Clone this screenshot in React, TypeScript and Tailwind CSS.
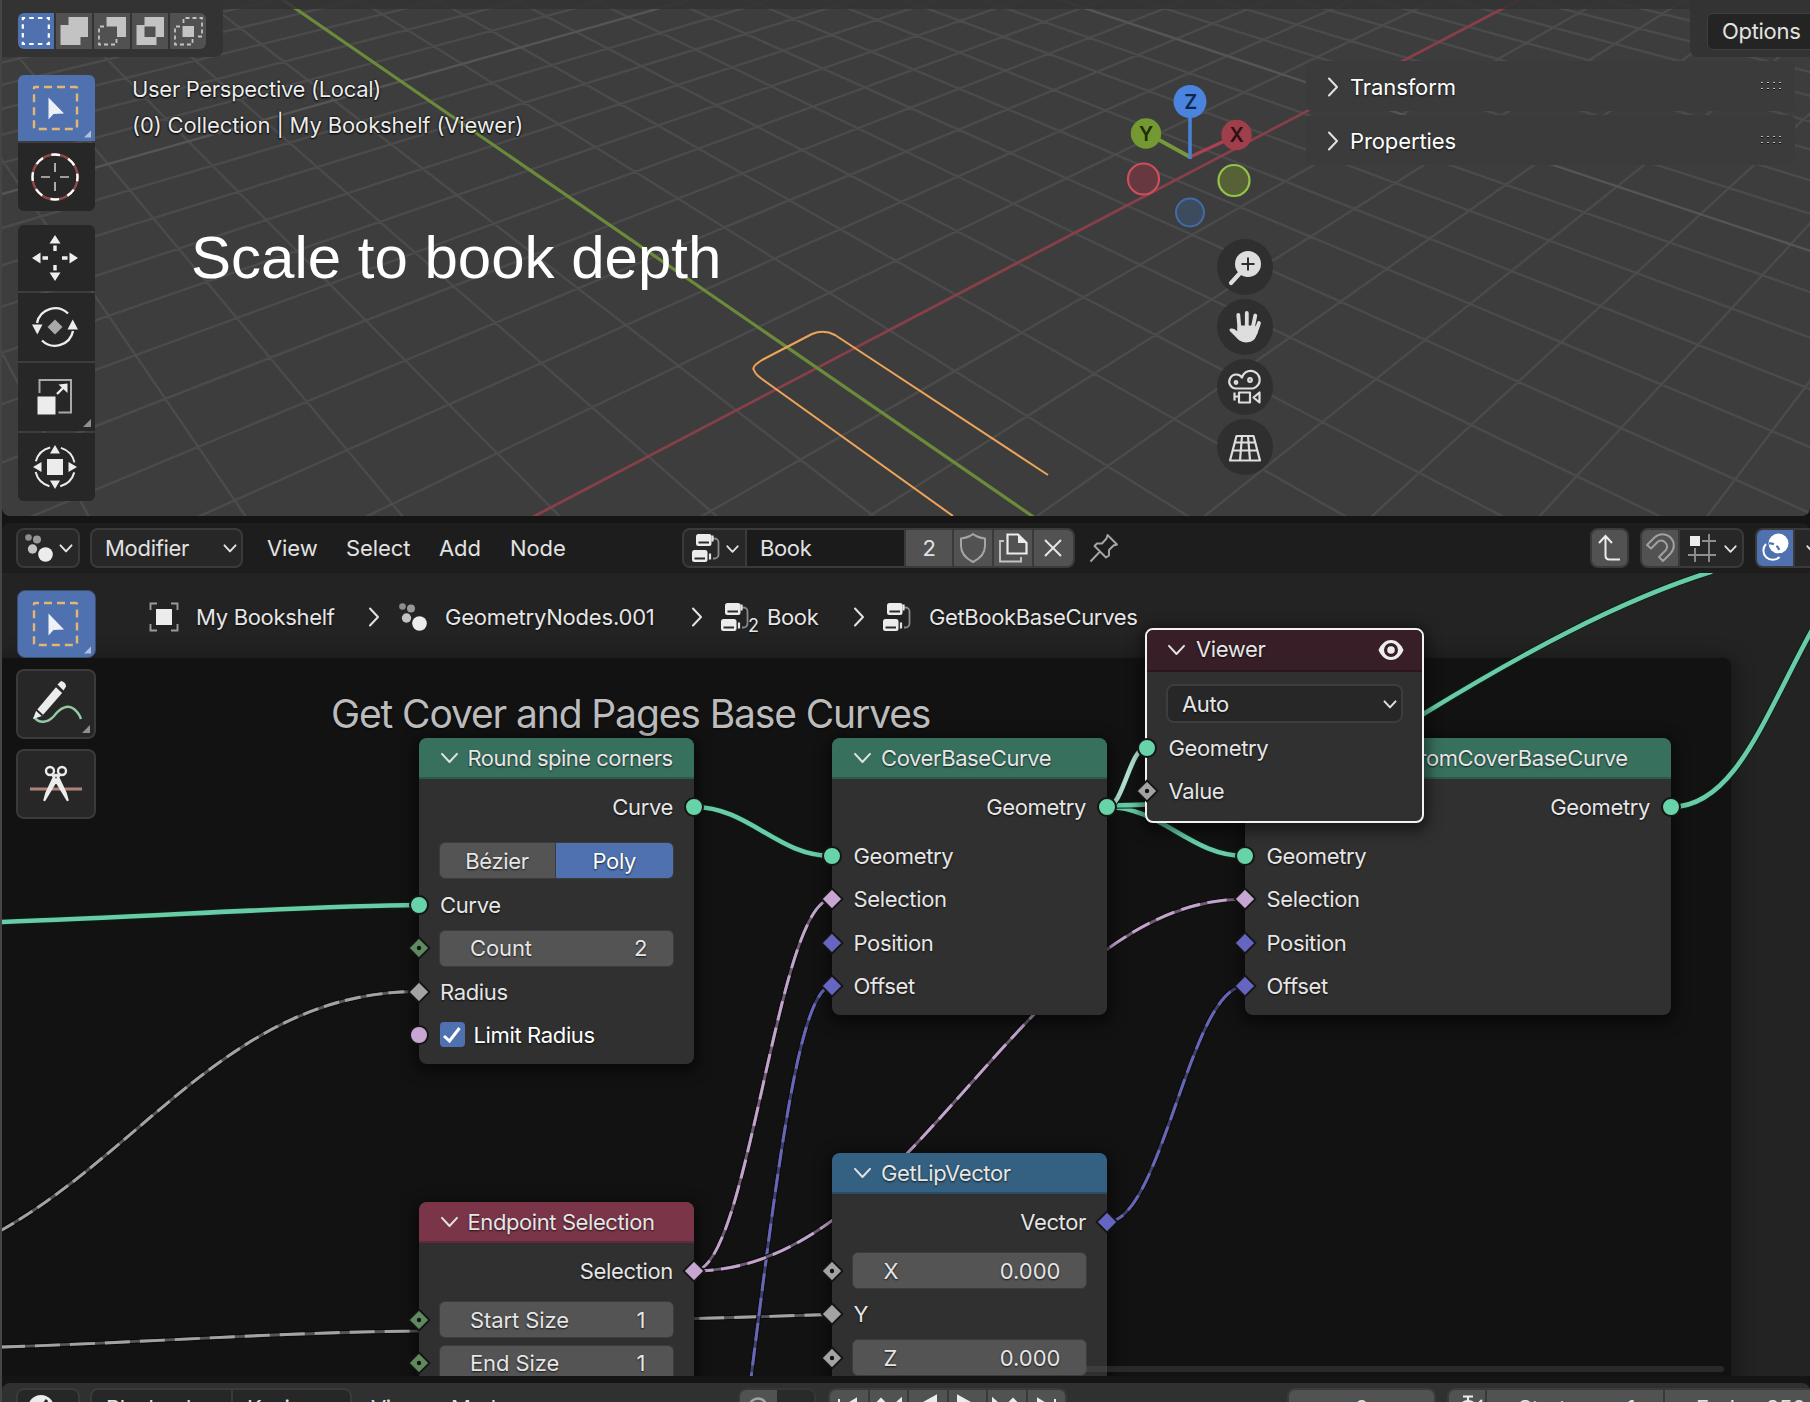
import React from "react";

/* ---------- ground-plane projection for the viewport grid ---------- */
const G = 0.0457, H = 0.0488;
const project = (i: number, j: number) => {
  const w = 1 + G * i + H * j;
  return [(816.2 + 113.6 * i - 22.1 * j) / w, (368.3 - 23.2 * i - 24.7 * j) / w];
};
const gridPaths = () => {
  let minor = "", major = "";
  for (let n = -24; n <= 44; n++) {
    if (n === 0) continue;
    const jLo = (0.12 - 1 - G * n) / H;
    const iLo = (0.12 - 1 - H * n) / G;
    const [ax, ay] = project(n, jLo), [bx, by] = project(n, 46);
    const [cx, cy] = project(iLo, n), [dx, dy] = project(46, n);
    const s = `M${ax.toFixed(1)} ${ay.toFixed(1)}L${bx.toFixed(1)} ${by.toFixed(1)}M${cx.toFixed(1)} ${cy.toFixed(1)}L${dx.toFixed(1)} ${dy.toFixed(1)}`;
    if (n % 10 === 0) major += s;
    else minor += s;
  }
  return { minor, major };
};
const grid = gridPaths();

function Scene() {
  return (
    <svg className="absolute inset-0" width="1810" height="516" viewBox="0 0 1810 516" fill="none">
      <path d={grid.minor} stroke="#4b4b4b" strokeWidth="2.4" />
      <path d={grid.major} stroke="#555555" strokeWidth="2.4" />
      <path d="M530 518.4L1519 0" stroke="#874049" strokeWidth="2.8" />
      <path d="M283 0L1035 518" stroke="#6b8a3a" strokeWidth="3.2" />
      <path d="M1048 475L835 335Q824 329 812 334L762 360Q751 367 754 370Q755 374 762 379L953 516" stroke="#eda458" strokeWidth="2" strokeLinejoin="round" />
    </svg>
  );
}

/* ---------- icons ---------- */
const Chevron = ({ className = "", w = 15, thin = false }: { className?: string; w?: number; thin?: boolean }) => (
  <svg className={className} width={w} height={w * 0.66} viewBox="0 0 15 10" fill="none" stroke="#e2e2e2" strokeWidth={thin ? 1.6 : 2.1} strokeLinecap="round" strokeLinejoin="round">
    <path d="M1.5 1.5L7.5 8L13.5 1.5" />
  </svg>
);
const ChevronRight = ({ className = "" }: { className?: string }) => (
  <svg className={className} width="12" height="20" viewBox="0 0 12 20" fill="none" stroke="#e2e2e2" strokeWidth="2" strokeLinecap="round" strokeLinejoin="round">
    <path d="M2 1.5L10 10L2 18.5" />
  </svg>
);
const GeoNodesIcon = () => (
  <svg width="30" height="30" viewBox="0 0 30 30" className="shrink-0">
    <circle cx="4.5" cy="4.5" r="3.3" fill="#8d8d8d" />
    <circle cx="13" cy="6.5" r="4" fill="#989898" />
    <circle cx="8.5" cy="16" r="4.7" fill="#c2c2c2" />
    <circle cx="21.5" cy="21.5" r="7.3" fill="#ececec" />
  </svg>
);
const NodeTreeIcon = () => (
  <svg width="30" height="30" viewBox="0 0 30 30" className="shrink-0">
    <path d="M22 5.5h1.500a4 4 0 0 1 4 4v12a4 4 0 0 1-4 4H22" fill="none" stroke="#8a8a8a" strokeWidth="1.8" />
    <path d="M21.500 2.500v6M19 20.500v6" stroke="#e6e6e6" strokeWidth="2.200" />
    <rect x="5" y="1" width="15.500" height="12" rx="2.500" fill="#ececec" />
    <rect x="1" y="17" width="15.500" height="12" rx="2.500" fill="#ececec" />
    <path d="M7.500 9.500h10.500M3.500 25.500h10.500" stroke="#2a2a2a" strokeWidth="1.800" />
  </svg>
);
const SelectBoxIcon = () => (
  <svg width="77" height="66" viewBox="0 0 77 66">
    <rect x="16" y="12" width="43" height="42" rx="1" fill="none" stroke="#e3b671" strokeWidth="2.4" strokeDasharray="8 5" strokeDashoffset="4" />
    <path d="M30.500 22.500V44.500L35.500 39L46 38.500Z" fill="#eef1f7" />
    <path d="M73 55.500V62.500H66Z" fill="#b2bfdb" />
  </svg>
);

function Corner() {
  return (
    <svg className="absolute right-1 bottom-1" width="8" height="8" viewBox="0 0 8 8">
      <path d="M8 0V8H0Z" fill="#8f8f8f" />
    </svg>
  );
}

const modeIcons = [
  <rect key="a" x="4.800" y="5" width="26" height="26" fill="none" stroke="#fff" strokeWidth="2.200" strokeDasharray="4.500 4.167" strokeDashoffset="2.200" />,
  <path key="b" d="M12.500 4H32V24H24.500V32H4.500V12H12.500Z" fill="#c3c3c3" />,
  <g key="c">
    <path d="M12.500 4H32V24H23V13.500H12.500Z" fill="#c3c3c3" />
    <path d="M10 13.500H5V31.500H22.500V26" fill="none" stroke="#c3c3c3" strokeWidth="1.800" strokeDasharray="4 3" />
  </g>,
  <path key="d" d="M12.500 4H32V24H24.500V32H4.500V12H12.500ZM12.500 13.500V24H23.500V13.500Z" fillRule="evenodd" fill="#c3c3c3" />,
  <g key="e">
    <rect x="12.500" y="13" width="11.500" height="11" fill="#c3c3c3" />
    <path d="M13.500 10V5H32V23.500H26.500M10 13.500H5V31.500H22.500V26" fill="none" stroke="#c3c3c3" strokeWidth="1.800" strokeDasharray="4 3" />
  </g>,
];

function SelectModes() {
  return (
    <div className="flex h-[57px] w-[221px] rounded-br-lg bg-[#333333] pt-[13px] pl-4">
      <div className="flex h-[36px] gap-[2px] overflow-hidden rounded-md">
        {modeIcons.map((icon, k) => (
          <div key={k} className={`flex h-[36px] w-[36px] ${k === 0 ? "bg-[#4f71af]" : "bg-[#515151]"}`}>
            <svg width="36" height="36" viewBox="0 0 36 36">{icon}</svg>
          </div>
        ))}
      </div>
    </div>
  );
}

const ToolIcon = ({ children }: { children: React.ReactNode }) => (
  <svg width="54" height="54" viewBox="-27 -27 54 54" className="-ml-1">{children}</svg>
);

function ViewTools() {
  return (
    <div className="flex w-[77px] flex-col">
      <div className="flex flex-col gap-[2px] overflow-hidden rounded-md">
        <div className="h-[66px] bg-[#4f71af]"><SelectBoxIcon /></div>
        <div className="flex h-[68px] items-center justify-center bg-[#272727]">
          <ToolIcon>
            <circle r="22.500" fill="none" stroke="#8f4a48" strokeWidth="2.400" />
            <circle r="22.500" fill="none" stroke="#ffffff" strokeWidth="2.400" strokeDasharray="8.835 8.835" strokeDashoffset="4.400" />
            <path d="M0 -14V-5M0 5V14M-14 0H-5M5 0H14" stroke="#c4c4c4" strokeWidth="1.700" />
          </ToolIcon>
        </div>
      </div>
      <div className="mt-[14px] flex flex-col gap-[2px] overflow-hidden rounded-md">
        <div className="flex h-[66px] items-center justify-center bg-[#272727]">
          <ToolIcon>
            <g fill="#eeeeee">
              {[0, 90, 180, 270].map((r) => (
                <path key={r} transform={`rotate(${r})`} d="M0 -23L5.500 -14.500H-5.500ZM-1.700 -12.500H1.700V-7H-1.700Z" />
              ))}
            </g>
          </ToolIcon>
        </div>
        <div className="flex h-[68px] items-center justify-center bg-[#272727]">
          <ToolIcon>
            <path d="M-18 -4A18.500 18.500 0 0 1 13 -13.500M18 4A18.500 18.500 0 0 1 -13 13.500" fill="none" stroke="#ececec" strokeWidth="2.400" />
            <path d="M-23 -2.500H-12.500L-17.700 7.500ZM23 2.500H12.500L17.700 -7.500Z" fill="#ececec" />
            <path d="M0 -7.500L7.500 0L0 7.500L-7.500 0Z" fill="#a9a9a9" />
          </ToolIcon>
        </div>
        <div className="relative flex h-[68px] items-center justify-center bg-[#272727]">
          <ToolIcon>
            <path d="M-15.500 -4V-17H16V15.500H3.500" fill="none" stroke="#a9a9a9" strokeWidth="2" />
            <rect x="-17.500" y="-0.500" width="18" height="18" fill="#ececec" />
            <path d="M2 -3L8 -9" stroke="#ececec" strokeWidth="2.400" />
            <path d="M12.500 -13.500V-4L3.500 -12.500Z" fill="#ececec" />
          </ToolIcon>
          <Corner />
        </div>
        <div className="flex h-[68px] items-center justify-center bg-[#272727]">
          <ToolIcon>
            <rect x="-8" y="-8" width="16" height="16" fill="#ececec" />
            <circle r="20" fill="none" stroke="#ececec" strokeWidth="2" strokeDasharray="20.400 11" strokeDashoffset="-5.500" />
            <g fill="#ececec">
              {[0, 90, 180, 270].map((r) => (
                <path key={r} transform={`rotate(${r})`} d="M0 -22L5 -13.500H-5Z" />
              ))}
            </g>
          </ToolIcon>
        </div>
      </div>
    </div>
  );
}

function Gizmo() {
  return (
    <svg className="absolute top-[75px] left-[1120px]" width="140" height="160" viewBox="1120 75 140 160" fill="none">
      <circle cx="1190" cy="212.500" r="14" fill="#3d4b5e" stroke="#416ca8" strokeWidth="2" />
      <circle cx="1143.500" cy="179" r="15.500" fill="#65393f" stroke="#d04e5c" strokeWidth="2.200" />
      <circle cx="1234" cy="180.500" r="15.500" fill="#566235" stroke="#93c34a" strokeWidth="2.200" />
      <path d="M1190 157L1231 138" stroke="#a9414f" strokeWidth="3.400" />
      <path d="M1190 157L1152 136" stroke="#76993a" strokeWidth="3.800" />
      <path d="M1190 159V108" stroke="#4a80d6" strokeWidth="3.600" />
      <circle cx="1236.500" cy="135" r="15.200" fill="#a03f4c" />
      <circle cx="1146" cy="133.500" r="15.200" fill="#759932" />
      <circle cx="1190" cy="101.500" r="16.500" fill="#4a84df" />
      <g fontFamily="Inter, sans-serif" fontSize="20" fontWeight="600" textAnchor="middle">
        <text x="1236.500" y="142" fill="#2e1014">X</text>
        <text x="1146" y="140.500" fill="#202c08">Y</text>
        <text x="1190.500" y="108.500" fill="#10264b">Z</text>
      </g>
    </svg>
  );
}

const navIcons = [
  <g key="zoom">
    <path d="M-14 16L-4 5" stroke="#dedede" strokeWidth="4.200" strokeLinecap="round" />
    <circle cx="3" cy="-3" r="13" fill="#dedede" />
    <path d="M3 -9.500V3.500M-3.500 -3H9.500" stroke="#2e2e2e" strokeWidth="2" />
  </g>,
  <g key="hand" stroke="#dedede" strokeLinecap="round" strokeLinejoin="round">
    <path d="M-5.500 2L-6.700 -12M1.800 0V-14M7.500 2L10.300 -11.500M10.500 6L14 -4" strokeWidth="3.800" />
    <path d="M-14 3C-10 2 -9 7 -6.500 6L-6 0H9.500L11.500 4C9 12 7 14 1.500 14C-6 14 -8 8 -14 3Z" fill="#dedede" strokeWidth="3" />
  </g>,
  <g key="camera" stroke="#dedede" strokeWidth="2.200" fill="none" strokeLinejoin="round">
    <path d="M-9 1.500A7 7 0 1 1 -3 -9.500A9 9 0 1 1 8 1.500Z" />
    <path d="M-6 5.500H5V15.500H-6ZM-10.500 5.500V13.500M-10.500 9.500H-6M14.500 5.500V15.500L8.500 10.500Z" />
    <circle cx="-9" cy="-4.500" r="1.300" />
    <circle cx="5" cy="-7" r="1.800" />
  </g>,
  <g key="persp" stroke="#dedede" strokeWidth="2.200" fill="none" strokeLinejoin="round">
    <path d="M-8.500 -11H8.500L15 13.500H-15ZM-10.500 -4.500H10.500M-12.500 3.500H12.500M-3 -11L-5 13.500M3 -11L5 13.500" />
  </g>,
];

function NavButtons() {
  return (
    <div className="absolute top-[239px] left-[1217px] flex flex-col gap-1">
      {navIcons.map((icon, k) => (
        <div key={k} className="flex size-14 items-center justify-center rounded-full bg-[#2f2f2f]">
          <svg width="56" height="56" viewBox="-28 -28 56 56">{icon}</svg>
        </div>
      ))}
    </div>
  );
}

function SidePanel({ title }: { title: string }) {
  return (
    <div className="flex h-[50px] w-[489px] items-center rounded-md bg-[#3b3b3b] pt-[2px] pl-[21px]">
      <ChevronRight />
      <span className="ml-[11px] tracking-[-0.1px] text-white [text-shadow:0_1px_2px_#000000b0]">{title}</span>
      <svg className="mr-3 ml-auto -mt-[2px]" width="22" height="10" viewBox="0 0 22 10">
        {[0, 6, 12, 18].map((x) => (
          <g key={x}>
            <path d={`M${x} 1h2v1h-2zM${x} 7h2v1h-2z`} fill="#bdbdbd" />
            <path d={`M${x} 2h2v1h-2zM${x} 8h2v1h-2z`} fill="#0c0c0c" />
          </g>
        ))}
      </svg>
    </div>
  );
}

function Viewport() {
  return (
    <section className="relative h-[516px] overflow-hidden rounded-b-lg bg-[#3d3d3d] text-[#ececec]">
      <div className="absolute inset-y-0 -left-[2px] w-[1810px]">
        <Scene />
        <div className="absolute inset-x-0 top-0 h-[9px] bg-[#333333]/85" />
        <Gizmo />
        <NavButtons />
        <div className="absolute top-[61px] left-[1306px] flex flex-col gap-1">
          <SidePanel title="Transform" />
          <SidePanel title="Properties" />
        </div>
        <div className="absolute top-0 right-0 h-[57px] w-[120px] overflow-hidden rounded-bl-lg bg-[#333333] pt-[13px] pl-[17px]">
          <div className="flex h-[37px] w-[140px] items-center rounded-md border border-[#3f3f3f] bg-[#242424] pb-[1px] pl-[14px] tracking-[-0.3px] text-[#e2e2e2]">Options</div>
        </div>
      </div>
      <div className="relative flex flex-col">
        <SelectModes />
        <div className="mt-[18px] flex pl-4">
          <ViewTools />
          <div className="flex flex-col pl-[37px] [text-shadow:0_0_2px_#000,0_1px_2px_#000]">
            <span className="mt-[-4px] h-9 leading-9 tracking-[-0.310px]">User Perspective (Local)</span>
            <span className="h-9 leading-9 tracking-[-0.130px]">(0) Collection | My Bookshelf (Viewer)</span>
            <span className="mt-[82px] ml-[59px] font-['Liberation_Sans',sans-serif] text-[60px] leading-[66px] tracking-normal whitespace-nowrap text-white [text-shadow:none]">
              Scale to book depth
            </span>
          </div>
        </div>
      </div>
    </section>
  );
}

/* ---------- node editor header ---------- */
function EditorHeader() {
  return (
    <header className="relative flex h-[50px] items-center overflow-hidden rounded-t-lg bg-[#1d1d1d] text-[#e2e2e2]">
      <div className="ml-[14px] flex h-10 w-[64px] shrink-0 items-center rounded-lg border-2 border-[#3a3a3a] bg-[#272727] pl-[6px]">
        <GeoNodesIcon />
        <Chevron className="mt-[2px] ml-[5px]" w={14} />
      </div>
      <div className="ml-[10px] flex h-10 w-[153px] shrink-0 items-center rounded-lg border-2 border-[#3a3a3a] bg-[#272727] pr-[4px] pl-[13px]">
        <span className="tracking-[-0.300px]">Modifier</span>
        <Chevron className="mt-[2px] ml-auto" w={14} />
      </div>
      <nav className="flex shrink-0 pl-[24px] tracking-[-0.1px]">
        <span className="w-[79px]">View</span>
        <span className="w-[93px]">Select</span>
        <span className="w-[71px]">Add</span>
        <span className="w-[172px]">Node</span>
      </nav>
      <div className="flex h-10 w-[393px] shrink-0 overflow-hidden rounded-lg border-2 border-[#3a3a3a] bg-[#3a3a3a]">
        <div className="flex w-[61px] items-center bg-[#272727] pl-[7px]">
          <NodeTreeIcon />
          <Chevron className="mt-[2px] ml-[5px]" w={13} />
        </div>
        <div className="ml-[2px] flex w-[157px] items-center bg-[#1b1b1b] pl-[13px]">Book</div>
        <div className="ml-[2px] flex w-[46px] items-center justify-center bg-[#525252]">2</div>
        <div className="ml-[2px] flex w-[38px] items-center justify-center bg-[#525252]">
          <svg width="28" height="32" viewBox="0 0 28 32" fill="none" stroke="#a5a5a5" strokeWidth="2" strokeLinejoin="round">
            <path d="M14 2L17 4Q21 6 26 6.500V14C26 22 20 27 14 30C8 27 2 22 2 14V6.500Q7 6 11 4Z" />
          </svg>
        </div>
        <div className="ml-[2px] flex w-[38px] items-center justify-center bg-[#525252]">
          <svg width="30" height="30" viewBox="0 0 30 30" fill="none">
            <path d="M6 8H2V28.500H23V24" stroke="#c2c2c2" strokeWidth="1.900" />
            <path d="M9.500 1.500H20L28.500 10V20.500H9.500Z" stroke="#ececec" strokeWidth="2.200" />
            <path d="M20 1.500V10H28.500Z" fill="#ececec" />
          </svg>
        </div>
        <div className="ml-[2px] flex flex-1 items-center justify-center bg-[#525252] pr-[2px]">
          <svg width="18" height="18" viewBox="0 0 18 18" fill="none" stroke="#e6e6e6" strokeWidth="2">
            <path d="M1 1L17 17M17 1L1 17" />
          </svg>
        </div>
      </div>
      <svg className="ml-[14px] shrink-0" width="30" height="30" viewBox="0 0 30 30" fill="none" stroke="#a6a6a6" strokeWidth="1.900" strokeLinejoin="round">
        <path d="M18.500 2L28 11.500L24.500 12.500L20 17V22.500L17 24.500L5.500 13L8 10.500H13L17.500 5.500ZM11 18.500L1.500 28.500" />
      </svg>
      <div className="absolute top-[5px] left-[1588px] flex h-10 gap-[11px]">
        <div className="flex w-[39px] items-center justify-center rounded-lg border-2 border-[#3a3a3a] bg-[#525252]">
          <svg width="26" height="28" viewBox="0 0 26 28" fill="none" stroke="#ececec" strokeWidth="2">
            <path d="M2 9L8.500 2L15 9M8.500 2.500V21.500Q8.500 25.500 12.500 25.500H23" />
          </svg>
        </div>
        <div className="flex w-[104px] overflow-hidden rounded-lg border-2 border-[#3a3a3a] bg-[#3a3a3a]">
          <div className="flex w-[36px] items-center justify-center bg-[#525252]">
            <svg width="30" height="30" viewBox="0 0 30 30" fill="none" stroke="#a0a0a0" strokeWidth="2" strokeLinejoin="round">
              <path d="M2 12L9.500 4.500A11.300 11.300 0 0 1 25.500 20.500L18 28L14 24L21 17A6 6 0 0 0 13 8.500L6 15.500Z" />
            </svg>
          </div>
          <div className="ml-[2px] flex flex-1 items-center bg-[#272727] pl-[7px]">
            <svg width="30" height="30" viewBox="0 0 30 30" fill="none" stroke="#8f8f8f" strokeWidth="1.900">
              <path d="M8 15V29M22 1V29M15 8H29M1 22H29" />
              <rect x="3" y="3" width="10" height="10" fill="#ececec" stroke="none" />
            </svg>
            <Chevron className="mt-[2px] ml-[7px]" w={13} />
          </div>
        </div>
        <div className="flex w-[90px] overflow-hidden rounded-lg border-2 border-[#3a3a3a] bg-[#3a3a3a]">
          <div className="flex w-[36px] items-center justify-center bg-[#4f71af]">
            <svg width="32" height="32" viewBox="0 0 32 32" fill="none">
              <circle cx="19.500" cy="11.500" r="10" fill="#ffffff" />
              <path d="M7 12A9.300 9.300 0 1 0 20.500 25" stroke="#ffffff" strokeWidth="2" />
              <path d="M10 11.500A9.300 9.300 0 0 1 20.500 22" stroke="#4f71af" strokeWidth="2.200" strokeDasharray="5 3" />
            </svg>
          </div>
          <div className="ml-[2px] flex flex-1 items-center bg-[#272727] pl-[11px]">
            <Chevron className="mt-[2px]" w={13} />
          </div>
        </div>
      </div>
    </header>
  );
}

/* ---------- node canvas ---------- */
type SocketKind = "geo" | "bool" | "boolDot" | "vec" | "float" | "floatDot" | "intDot";
const socketFill: Record<SocketKind, string> = {
  geo: "#66d3a9", bool: "#c8a6d4", boolDot: "#c8a6d4", vec: "#6565c2", float: "#a3a3a3", floatDot: "#a3a3a3", intDot: "#5f8a60",
};
function Socket({ kind, side }: { kind: SocketKind; side: "in" | "out" }) {
  const round = kind === "geo" || kind === "boolDot";
  const dot = kind === "floatDot" || kind === "intDot";
  return (
    <svg className={`absolute top-1/2 -mt-3 ${side === "in" ? "-left-3" : "-right-3"}`} width="24" height="24" viewBox="-12 -12 24 24">
      {round
        ? <circle r="9" fill={socketFill[kind]} stroke="#151515" strokeWidth="2" />
        : <path d="M0 -10.500L10.500 0L0 10.500L-10.500 0Z" fill={socketFill[kind]} stroke="#151515" strokeWidth="1.800" />}
      {dot && <circle r="2.200" fill="#121212" />}
    </svg>
  );
}

function Out({ label, kind }: { label: string; kind: SocketKind }) {
  return (
    <div className="relative mt-[6px] mb-[6px] flex h-[43.300px] items-center justify-end pr-[21px]">
      {label}
      <Socket kind={kind} side="out" />
    </div>
  );
}
function In({ label, kind }: { label: string; kind: SocketKind }) {
  return (
    <div className="relative flex h-[43.300px] items-center pl-[21.500px]">
      {label}
      <Socket kind={kind} side="in" />
    </div>
  );
}
function Field({ label, value, kind }: { label: string; value: string; kind: SocketKind }) {
  return (
    <div className="relative flex h-[43.300px] items-center px-[20px]">
      <div className="flex h-[37px] flex-1 items-center justify-between rounded-md border border-[#3c3c3c] bg-[#545454] pr-[25.500px] pl-[30.500px] tracking-[-0.100px]">
        <span>{label}</span>
        <span className={value === "1" ? "pr-[2px] tracking-normal" : "tracking-normal"}>{value}</span>
      </div>
      <Socket kind={kind} side="in" />
    </div>
  );
}
function Node({ title, header, place, titleClass = "ml-[9px] tracking-[-0.410px]", children }: { title: string; header: string; place: string; titleClass?: string; children: React.ReactNode }) {
  return (
    <article className={`absolute rounded-lg bg-[#303030] shadow-[0_4px_14px_4px_#00000080] ${place}`}>
      <h3 className={`flex h-[41px] items-center rounded-t-lg border-b-2 border-black/20 pl-[21px] ${header}`}>
        <Chevron className="mt-[2px] shrink-0" w={19} thin />
        <span className={`whitespace-nowrap ${titleClass}`}>{title}</span>
      </h3>
      {children}
    </article>
  );
}

function DashedLink({ d, light, dark, dash = "19.5 7.5" }: { d: string; light: string; dark: string; dash?: string }) {
  return (
    <g fill="none">
      <path d={d} stroke="#0b0b0b" strokeWidth="5" />
      <path d={d} stroke={dark} strokeWidth="2.900" />
      <path d={d} stroke={light} strokeWidth="2.900" strokeDasharray={dash} />
    </g>
  );
}
function SolidLink({ d, color = "#69cca6" }: { d: string; color?: string }) {
  return (
    <g fill="none">
      <path d={d} stroke="#0a2018" strokeWidth="6.500" />
      <path d={d} stroke={color} strokeWidth="4.600" />
    </g>
  );
}
function Links() {
  return (
    <svg className="absolute inset-0" width="1810" height="803" viewBox="0 573 1810 803">
      <DashedLink d="M0 1231C145 1150 235 991 419 991.500" light="#a3a3a3" dark="#555555" dash="16 6" />
      <DashedLink d="M0 1347C140 1343 280 1332 419 1331L694 1318.500C740 1317.500 790 1315.500 832 1314.500" light="#a3a3a3" dark="#555555" dash="25 10" />
      <DashedLink d="M743 1440C773 1210 796 986 832 986" light="#6767b8" dark="#40406e" dash="18 7" />
      <DashedLink d="M694 1271C749 1271 777 899 832 899" light="#c3a4cd" dark="#6b5a70" />
      <DashedLink d="M694 1271C915 1271 1024 899 1245 899" light="#c3a4cd" dark="#6b5a70" />
      <DashedLink d="M1107 1222C1162 1222 1190 986 1245 986" light="#6767b8" dark="#40406e" dash="18 7" />
      <SolidLink d="M0 922C150 917 300 906 419 905" />
      <SolidLink d="M694 807C749 807 777 856 832 856" />
      <SolidLink d="M1107 807C1162 807 1190 856 1245 856" />
      <SolidLink d="M1107 805.500C1290 805.500 1360 755 1425 713C1520 655 1620 600 1712 571.500" />
      <SolidLink d="M1671 807C1735 807 1765 715 1812 630" />
      <SolidLink d="M1107 807C1123 807 1130 748 1146 748" color="#b5dfd0" />
    </svg>
  );
}

function ViewerNode() {
  return (
    <article className="absolute top-[54.500px] left-[1145px] h-[195px] w-[279px] rounded-lg border-2 border-[#f2f2f2] bg-[#303030] shadow-[0_4px_14px_4px_#00000080]">
      <h3 className="flex h-[42px] items-center rounded-t-md border-b-2 border-[#2a171e] bg-[#371e27] pr-[18px] pl-[20px]">
        <Chevron className="mt-[1px]" w={19} thin />
        <span className="-mt-[1px] ml-[10px]">Viewer</span>
        <svg className="ml-auto" width="26" height="22" viewBox="0 0 26 22">
          <path d="M13 1C19 1 23.500 6 25.500 11C23.500 16 19 21 13 21C7 21 2.500 16 0.500 11C2.500 6 7 1 13 1Z" fill="#ededed" />
          <circle cx="13" cy="11" r="7" fill="#371e27" />
          <circle cx="13" cy="11" r="3.800" fill="#ededed" />
        </svg>
      </h3>
      <div className="flex h-[64px] items-center px-[19px]">
        <div className="flex h-[39px] flex-1 items-center justify-between rounded-lg border-2 border-[#3d3d3d] bg-[#272727] pr-[4px] pl-[14px]">
          Auto
          <Chevron className="mt-[2px]" w={14} />
        </div>
      </div>
      <div className="-mt-[9px]">
        <In label="Geometry" kind="geo" />
        <In label="Value" kind="floatDot" />
      </div>
    </article>
  );
}

function Canvas() {
  return (
    <main className="relative h-[803px] overflow-hidden bg-[#232323] text-[#e6e6e6]">
      <div className="absolute inset-y-0 -left-[2px] w-[1810px] [text-shadow:0_1px_2px_#000000c0]">
        <div className="absolute top-[85px] left-0 h-[740px] w-[1731px] rounded-tr-lg bg-[#121212] shadow-[0_4px_20px_4px_#00000060]" />
        <h2 className="absolute top-[117px] left-[331px] text-[39px] leading-[48px] tracking-[-1.120px] whitespace-nowrap text-[#bcbcbc]">Get Cover and Pages Base Curves</h2>
        <Links />

        <Node title="Round spine corners" header="bg-[#38705e]" place="top-[165px] left-[418.500px] h-[326px] w-[275.500px]" titleClass="ml-[9px] tracking-[-0.530px]">
          <Out label="Curve" kind="geo" />
          <div className="mt-[14px] mb-[4px] flex h-[37px] px-[20px]">
            <div className="flex flex-1 overflow-hidden rounded-md border border-[#3c3c3c] bg-[#3c3c3c]">
              <div className="flex w-[115px] items-center justify-center bg-[#545454]">Bézier</div>
              <div className="ml-px flex flex-1 items-center justify-center bg-[#4f71af] text-white">Poly</div>
            </div>
          </div>
          <In label="Curve" kind="geo" />
          <Field label="Count" value="2" kind="intDot" />
          <In label="Radius" kind="float" />
          <div className="relative flex h-[43.300px] items-center pl-[21px] text-white">
            <div className="mr-[9px] flex size-[25px] items-center justify-center rounded bg-[#4f71af]">
              <svg width="20" height="18" viewBox="0 0 20 18" fill="none" stroke="#fff" strokeWidth="3"><path d="M2 10L7.500 15L17.500 2" /></svg>
            </div>
            Limit Radius
            <Socket kind="boolDot" side="in" />
          </div>
        </Node>

        <Node title="CoverBaseCurve" header="bg-[#38705e]" place="top-[165px] left-[832px] h-[277px] w-[275px]">
          <Out label="Geometry" kind="geo" />
          <In label="Geometry" kind="geo" />
          <In label="Selection" kind="bool" />
          <In label="Position" kind="vec" />
          <In label="Offset" kind="vec" />
        </Node>

        <Node title="GetPagesFromCoverBaseCurve" header="bg-[#38705e]" place="top-[165px] left-[1245px] h-[277px] w-[426px]" titleClass="ml-[24px] tracking-[-0.410px]">
          <Out label="Geometry" kind="geo" />
          <In label="Geometry" kind="geo" />
          <In label="Selection" kind="bool" />
          <In label="Position" kind="vec" />
          <In label="Offset" kind="vec" />
        </Node>

        <Node title="Endpoint Selection" header="bg-[#7a3549]" place="top-[629px] left-[418.500px] h-[240px] w-[275.500px]">
          <Out label="Selection" kind="bool" />
          <Field label="Start Size" value="1" kind="intDot" />
          <Field label="End Size" value="1" kind="intDot" />
        </Node>

        <Node title="GetLipVector" header="bg-[#346181]" place="top-[580px] left-[832px] h-[260px] w-[275px]">
          <Out label="Vector" kind="vec" />
          <Field label="X" value="0.000" kind="floatDot" />
          <In label="Y" kind="float" />
          <Field label="Z" value="0.000" kind="floatDot" />
        </Node>

        <ViewerNode />
        <div className="absolute top-[793px] left-[1000px] h-[6px] w-[724px] rounded-full bg-gradient-to-r from-[#3d3d3d]/0 from-[10%] to-[#555555]/35 to-[12%]" />
      </div>

      <div className="relative flex">
        <div className="flex w-[94px] shrink-0 flex-col pt-[17px] pl-[14px]">
          <div className="ml-[1px] h-[68px] w-[79px] overflow-hidden rounded-lg border border-[#3c4d6e] bg-[#4f71af]"><SelectBoxIcon /></div>
          <div className="relative mt-[11px] flex h-[70px] w-20 items-center justify-center rounded-lg border-2 border-[#3a3a3a] bg-[#272727]">
            <svg width="54" height="54" viewBox="-27 -27 54 54" fill="none">
              <path d="M-22 13C-17 20 -8 19 -2 12C4 4 12 0 18 5Q23 9 25 15" stroke="#93c9a3" strokeWidth="2.400" />
              <path d="M-20 7L1 -18L7 -12L-14 12L-23 15Z" fill="#ececec" />
              <path d="M-20 5.500L-13.500 11.500M-0.500 -18.500L7 -11.500" stroke="#272727" strokeWidth="1.800" />
              <path d="M1.500 -19.500L5 -23Q10 -22 10 -17.500L7.500 -13.500Z" fill="#ececec" />
            </svg>
            <Corner />
          </div>
          <div className="mt-[10px] flex h-[70px] w-20 items-center justify-center rounded-lg border-2 border-[#3a3a3a] bg-[#272727]">
            <svg width="54" height="54" viewBox="-27 -27 54 54" fill="none">
              <path d="M-26 5H26" stroke="#b1827b" strokeWidth="3" />
              <path d="M-3 -8L11.500 16L9.500 9L1 -9ZM3 -8L-11.500 16L-9.500 9L-1 -9Z" fill="#ececec" stroke="#ececec" strokeWidth="2.400" strokeLinejoin="round" />
              <circle cx="-6" cy="-13" r="4" stroke="#ececec" strokeWidth="2.400" />
              <circle cx="6" cy="-13" r="4" stroke="#ececec" strokeWidth="2.400" />
            </svg>
          </div>
        </div>
        <div className="flex h-[88px] items-center pl-[53px] whitespace-nowrap [text-shadow:0_1px_2px_#000000c0]">
          <svg width="30" height="30" viewBox="0 0 30 30">
            <rect x="7" y="7" width="16" height="16" fill="#ececec" />
            <path d="M1.500 8V1.500H8M22 1.500H28.500V8M28.500 22V28.500H22M8 28.500H1.500V22" fill="none" stroke="#9a9a9a" strokeWidth="1.900" />
          </svg>
          <span className="w-[189px] pl-[17px] tracking-[-0.300px]">My Bookshelf</span>
          <ChevronRight className="mr-[18px]" />
          <GeoNodesIcon />
          <span className="w-[263px] pl-[17px] tracking-[-0.200px]">GeometryNodes.001</span>
          <ChevronRight className="mr-[17px]" />
          <div className="relative">
            <NodeTreeIcon />
            <span className="absolute top-[15px] left-[28px] text-[18px] leading-none tracking-normal">2</span>
          </div>
          <span className="w-[103px] pl-[17px]">Book</span>
          <ChevronRight className="mr-[17px]" />
          <NodeTreeIcon />
          <span className="pl-[17px]">GetBookBaseCurves</span>
        </div>
      </div>
    </main>
  );
}

/* ---------- timeline header, cut by the window's lower edge ---------- */
const playIcons = [
  "M9 9V26M26 9L13 17L26 26Z",
  "M3 17L11 9L19 17L11 25ZM31 9L22 17L31 26Z",
  "M27 6V28L7 17Z",
  "M9 6V28L29 17Z",
  "M33 17L25 9L17 17L25 25ZM5 9L14 17L5 26Z",
  "M10 9L23 17L10 26ZM27 9V26",
];
function Timeline() {
  return (
    <footer className="h-[19px] overflow-hidden rounded-t-lg bg-[#303030] text-[#e2e2e2]">
      <div className="flex h-[50px] items-center whitespace-nowrap">
        <div className="ml-[14px] h-10 w-[64px] shrink-0 rounded-lg border-2 border-[#3a3a3a] bg-[#272727] pt-[4px] pl-[9px]">
          <svg width="28" height="28" viewBox="0 0 28 28">
            <circle cx="14" cy="14" r="13" fill="#ececec" />
            <path d="M14 14L20 6" stroke="#272727" strokeWidth="3" />
          </svg>
        </div>
        <div className="ml-[10px] flex h-10 w-[262px] shrink-0 rounded-lg border-2 border-[#3a3a3a] bg-[#272727] leading-[37px]">
          <span className="w-[141px] border-r-2 border-[#3a3a3a] pl-[14px]">Playback</span>
          <span className="pl-[14px]">Keying</span>
        </div>
        <span className="ml-[19px] w-[80px] shrink-0">View</span>
        <span className="w-[287px] shrink-0">Marker</span>
        <div className="flex h-10 w-[78px] shrink-0 overflow-hidden rounded-lg border-2 border-[#363636] bg-[#2a2a2a]">
          <div className="w-[37px] bg-[#525252] pt-[7px] pl-[8px]">
            <svg width="20" height="20" viewBox="0 0 20 20"><circle cx="10" cy="10" r="8.500" fill="none" stroke="#a3a3a3" strokeWidth="2.500" /></svg>
          </div>
        </div>
        <div className="ml-[12px] flex h-10 w-[239px] shrink-0 gap-[2px] overflow-hidden rounded-lg border-2 border-[#3a3a3a] bg-[#3a3a3a]">
          {playIcons.map((d) => (
            <div key={d} className="flex-1 bg-[#525252]">
              <svg width="36" height="36" viewBox="0 0 36 36"><path d={d} fill="#ececec" stroke="#ececec" strokeWidth="2" /></svg>
            </div>
          ))}
        </div>
        <div className="ml-[220px] h-10 w-[149px] shrink-0 rounded-lg border-2 border-[#3a3a3a] bg-[#525252] text-center leading-[37px]">0</div>
        <div className="ml-[11px] flex h-10 w-[440px] shrink-0 overflow-hidden rounded-lg border-2 border-[#3a3a3a] bg-[#3a3a3a] leading-[37px]">
          <div className="w-[36px] bg-[#525252] pt-[5px] pl-[7px]">
            <svg width="28" height="26" viewBox="0 0 28 26" fill="none" stroke="#ececec" strokeWidth="2.200">
              <circle cx="12" cy="15" r="9" /><path d="M12 6V1.500M7 1.500H17M19 12L26 5M12 15L16 11" />
            </svg>
          </div>
          <div className="ml-[2px] flex w-[176px] justify-between bg-[#525252] pr-[28px] pl-[31px]"><span>Start</span><span>1</span></div>
          <div className="ml-[2px] flex flex-1 bg-[#525252] pl-[31px]"><span className="w-[70px]">End</span><span>250</span></div>
        </div>
      </div>
    </footer>
  );
}

export default function App() {
  return (
    <div className="flex h-[1402px] w-[1810px] flex-col gap-[7px] overflow-hidden border-l-2 border-[#454545] bg-[#151515] font-[Inter,sans-serif] text-[22px] leading-[28px] tracking-[-0.360px]">
      <Viewport />
      <div className="flex flex-col">
        <EditorHeader />
        <Canvas />
      </div>
      <Timeline />
    </div>
  );
}
